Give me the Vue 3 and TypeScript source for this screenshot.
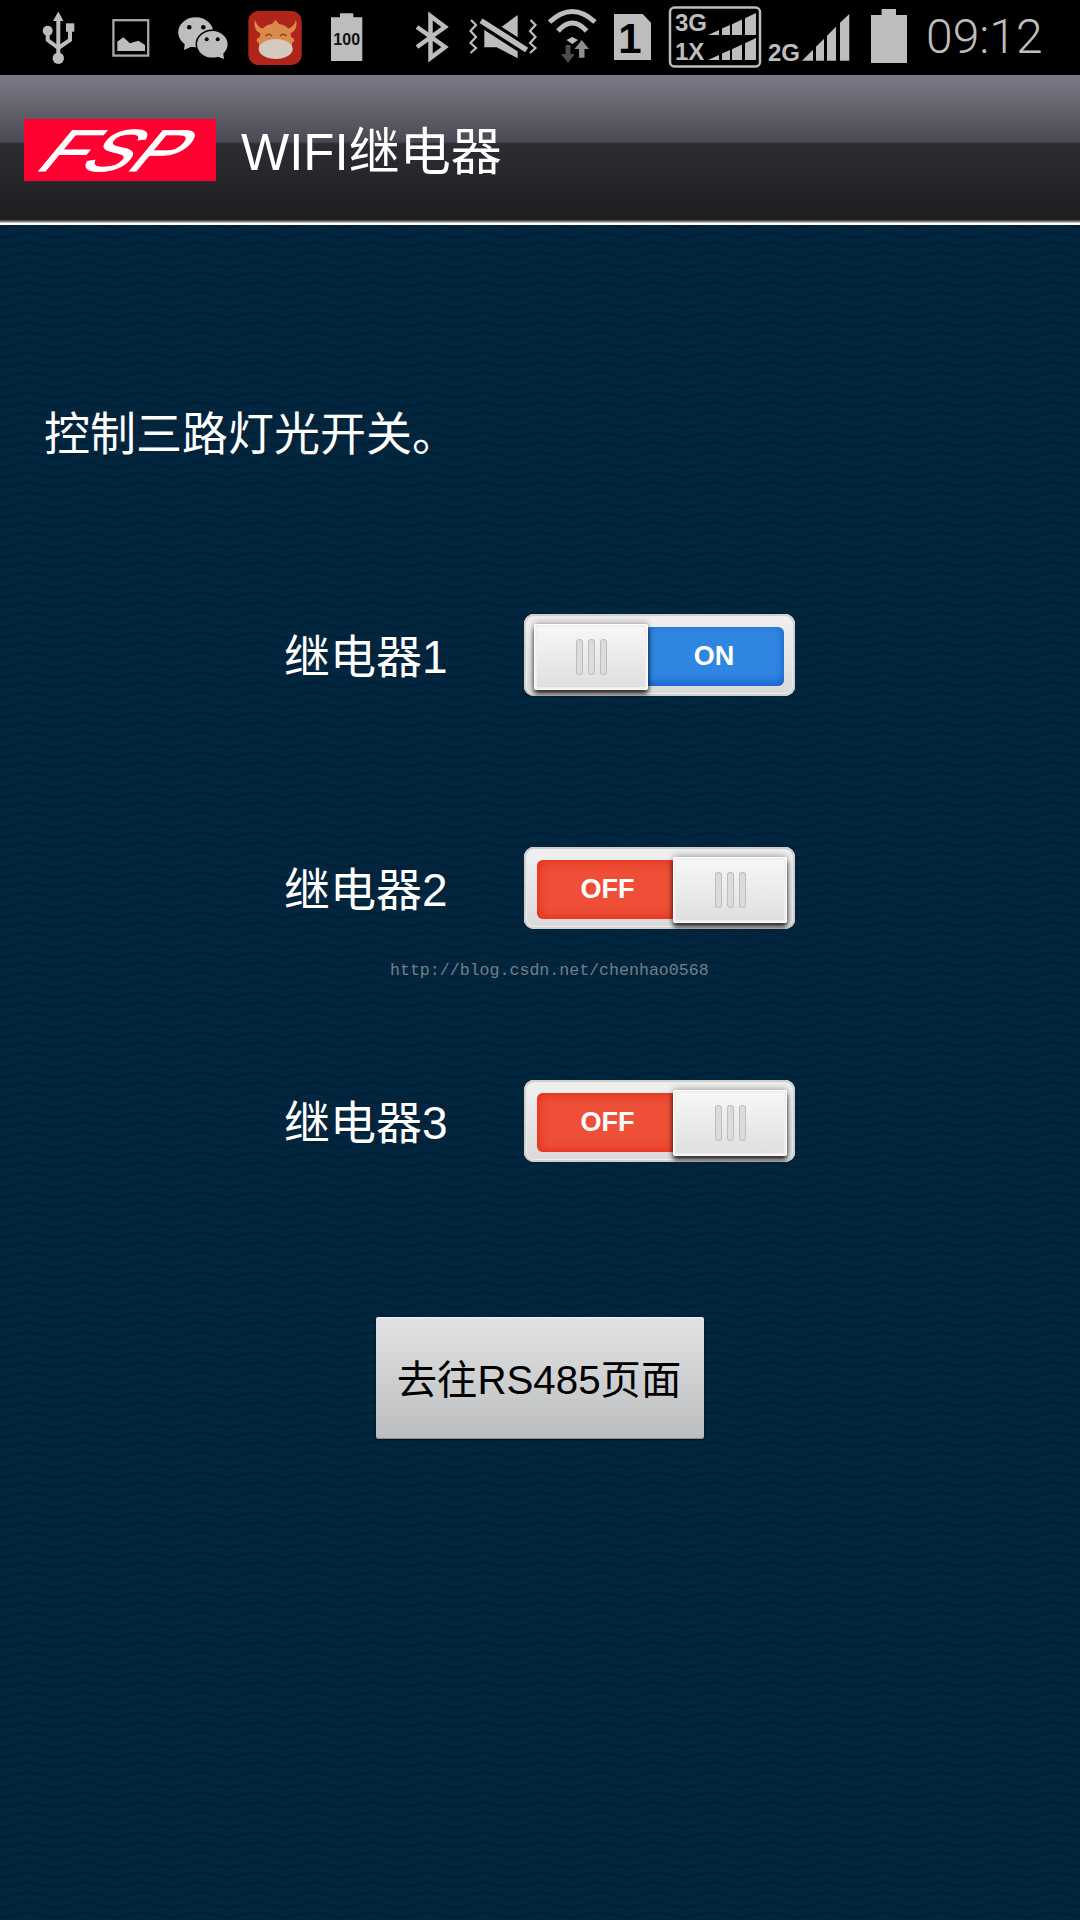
<script setup lang="ts">
interface Relay { id: number; label: string; on: boolean }
const relays: Relay[] = [
  { id: 1, label: '继电器1', on: true },
  { id: 2, label: '继电器2', on: false },
  { id: 3, label: '继电器3', on: false },
]
</script>

<template>
  <div class="page">
    <header class="status">
      <svg class="i-usb" width="34" height="75" viewBox="42 0 34 75">
        <path d="M58.3 16V56M47.7 31V40L58.3 48M70 31V40L58.3 48" fill="none" stroke="#bdbdbd" stroke-width="4" />
        <g fill="#bdbdbd">
          <path d="M58.3 11.500L63.500 21H53Z" />
          <circle cx="47.700" cy="30.700" r="5" />
          <rect x="66" y="23.300" width="8.300" height="8.400" />
          <circle cx="58.300" cy="58.300" r="5.700" />
        </g>
      </svg>
      <svg class="i-image" width="38" height="75" viewBox="112 0 38 75">
        <rect x="113.400" y="20.200" width="34.800" height="35.400" fill="none" stroke="#a8a8a8" stroke-width="2.300" />
        <path d="M117.300 51V41.700L123.300 37.300L130 43.300L138.300 40.700L145 45V51Z" fill="#bdbdbd" />
      </svg>
      <svg class="i-wechat" width="53" height="75" viewBox="177 0 53 75">
        <ellipse cx="195.700" cy="32.300" rx="17.500" ry="15" fill="#bdbdbd" />
        <path d="M184 50L185 42L193 46Z" fill="#bdbdbd" />
        <circle cx="189.300" cy="27.300" r="2.300" fill="#000" />
        <circle cx="203.300" cy="27.300" r="2.300" fill="#000" />
        <ellipse cx="212.300" cy="44.300" rx="16" ry="14" fill="#bdbdbd" stroke="#000" stroke-width="1.500" />
        <path d="M224 59L216 56L223 52Z" fill="#bdbdbd" />
        <circle cx="206.700" cy="39.300" r="2" fill="#000" />
        <circle cx="217.700" cy="39.300" r="2" fill="#000" />
      </svg>
      <svg class="i-app" width="54" height="75" viewBox="248 0 54 75">
        <rect x="248.300" y="11" width="53.400" height="54" rx="10" fill="#b02419" />
        <path d="M255 20C253 28 257 33 263 34L265 29C261 29 257 26 255 20ZM296 20C298 28 294 33 288 34L286 29C290 29 294 26 296 20Z" fill="#d98a4c" />
        <path d="M275.700 20L279 24C287 25 291 30 291 37C295 38 295 42 292 43V50H259V43C256 42 256 38 260 37C260 30 264 25 272 24Z" fill="#d98a4c" />
        <ellipse cx="275.700" cy="49" rx="17" ry="10" fill="#d4c9bd" />
        <path d="M265.500 36Q268.700 32.500 272 36M280 36Q283.300 32.500 286.500 36" fill="none" stroke="#8a4d1e" stroke-width="1.500" />
      </svg>
      <svg class="i-batt100" width="32" height="75" viewBox="331 0 32 75">
        <path d="M331 17.300H340V13.300H353.300V17.300H362.300V61H331Z" fill="#bdbdbd" />
        <text x="346.700" y="45" text-anchor="middle" class="tiny">100</text>
      </svg>
      <svg class="i-bt" width="35" height="75" viewBox="414 0 35 75">
        <path d="M417 27L445 47L430.500 58V16L445 27L417 47" fill="none" stroke="#bdbdbd" stroke-width="4.500" stroke-miterlimit="8" />
      </svg>
      <svg class="i-mute" width="70" height="75" viewBox="468 0 70 75">
        <g fill="#bdbdbd">
          <path d="M484.300 26V47.300H496.700L517.700 58.300V15L501.700 26.700Z" />
        </g>
        <path d="M481 20.700L526.700 50" stroke="#000" stroke-width="12" />
        <path d="M481 20.700L526.700 50" stroke="#bdbdbd" stroke-width="5.500" />
        <path d="M471 20L476 25L470.500 31L476 37L470.500 43L476 48L470.500 53M530.500 20L535.500 25L530 31L535.500 37L530 43L535.500 48L530 53" fill="none" stroke="#bdbdbd" stroke-width="2.200" />
      </svg>
      <svg class="i-wifi" width="50" height="75" viewBox="547 0 50 75">
        <g fill="none" stroke="#bdbdbd" stroke-width="5">
          <path d="M549.500 22Q572.300 1 595 22" />
          <path d="M558 31Q572.300 15 586.600 31" />
        </g>
        <path d="M566.500 40L572.300 37L578 40L572.300 44Z" fill="#bdbdbd" />
        <path d="M565.500 45H570.500V54H575L568 62.700L561 54H565.500Z" fill="#4c4c4c" />
        <path d="M581.700 40L589 49H584.500V57.700H579V49H574.500Z" fill="#8e8e8e" />
      </svg>
      <svg class="i-sim" width="37" height="75" viewBox="614 0 37 75">
        <path d="M614 14H642.700L651 22.700V60H614Z" fill="#bdbdbd" />
        <text x="630" y="53.300" text-anchor="middle" class="sim">1</text>
      </svg>
      <svg class="i-3g" width="94" height="75" viewBox="668 0 94 75">
        <rect x="670" y="7.500" width="90" height="59" rx="4.500" fill="none" stroke="#bdbdbd" stroke-width="2.500" />
        <text x="675" y="30.700" class="net">3G</text>
        <text x="675" y="60" class="net">1X</text>
        <g fill="#bdbdbd">
          <path d="M708 35L719 30V35ZM722 35V28.600L730 25V35ZM732 35V24.200L742 19.600V35ZM745 35V18.200L756 13V35Z" />
          <path d="M708 60L719 55V60ZM722 60V53.600L730 50V60ZM732 60V49.200L742 44.600V60ZM745 60V43.200L756 38V60Z" />
        </g>
      </svg>
      <svg class="i-2g" width="84" height="75" viewBox="767 0 84 75">
        <text x="768" y="60.700" class="net">2G</text>
        <path d="M802 60.700L813 49.700V60.700ZM816 60.700V46.700L824 38.700V60.700ZM827 60.700V35.700L836 26.700V60.700ZM840 60.700V22.700L849.300 14V60.700Z" fill="#bdbdbd" />
      </svg>
      <svg class="i-batt" width="37" height="75" viewBox="871 0 37 75">
        <path d="M871 15H881.600V9H896V15H907V63H871Z" fill="#bdbdbd" />
      </svg>
      <span class="clock">09:12</span>
    </header>

    <div class="actionbar">
      <svg class="logo" width="192" height="62" viewBox="0 0 192 62">
        <rect width="192" height="62" fill="#ff0030" />
        <text class="logo-text" transform="translate(9 51.500) skewX(-39.600)" textLength="138" lengthAdjust="spacingAndGlyphs">FSP</text>
      </svg>
      <h1 class="title">WIFI继电器</h1>
    </div>
    <div class="rule"></div>

    <main class="content">
      <p class="intro">控制三路灯光开关。</p>
      <div class="relays">
        <div v-for="relay in relays" :key="relay.id" class="relay">
          <span class="relay-label">{{ relay.label }}</span>
          <div class="switch">
            <div class="track" :class="relay.on ? 'is-on' : 'is-off'">{{ relay.on ? 'ON' : 'OFF' }}</div>
            <div class="knob" :class="relay.on ? 'knob-left' : 'knob-right'">
              <i></i><i></i><i></i>
            </div>
          </div>
        </div>
      </div>
      <button class="go" type="button">去往RS485页面</button>
    </main>

    <div class="watermark">http://blog.csdn.net/chenhao0568</div>
  </div>
</template>

<style>
html, body { margin: 0; background: #02243f; }
</style>

<style scoped>
.page {
  position: relative;
  width: 1080px;
  height: 1920px;
  overflow: hidden;
  font-family: "Liberation Sans", "Noto Sans CJK SC", sans-serif;
  background-color: #03263f;
  background-image: url("data:image/svg+xml,%3Csvg xmlns='http://www.w3.org/2000/svg' width='57' height='10'%3E%3Cg fill='none' stroke='%23001c34' stroke-width='3' stroke-opacity='.5'%3E%3Cpath d='M0 7.500C14 7.500 14 2.500 28.500 2.500S43 7.500 57 7.500'/%3E%3Cpath d='M0 17.500C14 17.500 14 12.500 28.500 12.500S43 17.500 57 17.500'/%3E%3Cpath d='M0 -2.500C14 -2.500 14 -7.500 28.500 -7.500S43 -2.500 57 -2.500'/%3E%3C/g%3E%3C/svg%3E");
}
.status {
  display: flex;
  height: 75px;
  background: #000;
}
.status svg { flex: none; display: block; }
.i-usb { margin-left: 42px; }
.i-image { margin-left: 36px; }
.i-wechat { margin-left: 27px; }
.i-app { margin-left: 18px; }
.i-batt100 { margin-left: 29px; }
.i-bt { margin-left: 51px; }
.i-mute { margin-left: 19px; }
.i-wifi { margin-left: 9px; }
.i-sim { margin-left: 17px; }
.i-3g { margin-left: 17px; }
.i-2g { margin-left: 5px; }
.i-batt { margin-left: 20px; }
.tiny { font: 700 16px "Liberation Sans", sans-serif; fill: #111; }
.sim { font: 700 42px "Liberation Sans", sans-serif; fill: #000; }
.net { font: 700 24px "Liberation Sans", sans-serif; fill: #bdbdbd; }
.clock {
  margin-left: 18px;
  font: 300 48px/73px Roboto, sans-serif;
  color: #bdbdbd;
}
.actionbar {
  display: flex;
  align-items: center;
  height: 145px;
  padding: 5px 0 0 24px;
  box-sizing: border-box;
  background: linear-gradient(#7b7b87 0, #4a4a54 46%, #2c2c32 47.500%, #1e1e21 100%);
}
.logo { display: block; flex: none; overflow: visible; }
.logo-text { font: 400 59px "Liberation Sans", sans-serif; fill: #fff; stroke: #fff; stroke-width: .9px; }
.title {
  margin: 5px 0 0 25px;
  font-size: 51px;
  font-weight: 400;
  color: #fff;
  line-height: 60px;
}
.rule {
  height: 5px;
  background: linear-gradient(#3a3a3a 0, #8f8f8f 40%, #fff 60%, #fff 100%);
}
.content {
  display: flex;
  flex-direction: column;
  padding-top: 178px;
}
.intro {
  margin: 0;
  padding-left: 44px;
  font-size: 46px;
  line-height: 62px;
  color: #fff;
}
.relays {
  display: flex;
  flex-direction: column;
  gap: 151px;
  margin-top: 149px;
  padding-left: 284px;
}
.relay {
  display: flex;
  align-items: center;
  height: 82px;
}
.relay-label {
  width: 240px;
  margin-top: -4px;
  font-size: 46px;
  color: #fff;
}
.switch {
  position: relative;
  width: 271px;
  height: 82px;
  border-radius: 10px;
  background: linear-gradient(#f1f1f1, #d9d9d9);
  box-shadow: inset 0 0 0 2px #cfcfcf, inset 0 0 0 3px #ececec;
}
.track {
  position: absolute;
  top: 13px;
  bottom: 10px;
  display: flex;
  align-items: center;
  justify-content: center;
  border-radius: 6px;
  font-size: 27px;
  font-weight: 700;
  color: #fff;
}
.track.is-on {
  left: 120px;
  right: 11px;
  background: #2f86e0;
  box-shadow: inset 0 -3px 10px rgba(10, 60, 190, .6);
}
.track.is-off {
  left: 13px;
  right: 107px;
  padding-right: 10px;
  background: #ef4f37;
  box-shadow: inset 0 0 12px rgba(215, 30, 15, .85);
}
.knob {
  position: absolute;
  top: 10px;
  display: flex;
  align-items: center;
  justify-content: center;
  gap: 5px;
  width: 114px;
  height: 66px;
  border-radius: 3px;
  background: linear-gradient(#f8f8f8, #dedede);
  box-shadow: inset 0 0 0 1px #fff, inset 0 0 0 3px #efefef, 0 4px 5px rgba(0, 0, 0, .8), 0 -2px 6px rgba(0, 0, 0, .25);
}
.knob-left { left: 10px; }
.knob-right { left: 149px; }
.knob i {
  display: block;
  width: 7px;
  height: 36px;
  border-radius: 4px;
  background: #dcdcdc;
  box-shadow: inset 0 0 0 1px #bdbdbd;
}
.go {
  align-self: center;
  width: 328px;
  height: 122px;
  margin-top: 155px;
  padding: 0 2px 4px 0;
  border: 0;
  border-radius: 3px;
  background: linear-gradient(#e2e3e5, #bcbdbf);
  box-shadow: inset 0 1px 0 #f0f0f0, inset 0 -1px 0 #8d8e90, 0 1px 2px rgba(0, 0, 0, .6);
  font-family: inherit;
  font-size: 40.300px;
  color: #000;
}
.watermark {
  position: absolute;
  left: 390px;
  top: 959px;
  font: 16.600px/24px "Liberation Mono", monospace;
  color: #6f8088;
}
</style>
